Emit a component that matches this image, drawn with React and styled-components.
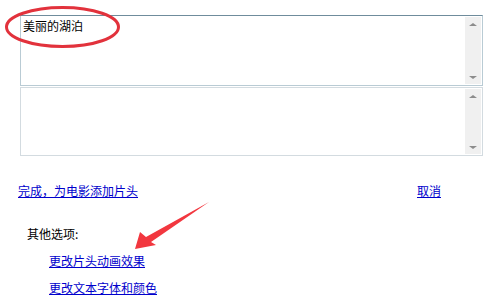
import styled, { createGlobalStyle } from "styled-components"

const GlobalStyle = createGlobalStyle`
    html, body {
        margin: 0;
        padding: 0;
        background: #fff;
    }
    body {
        font-family: "Noto Sans CJK SC", "Liberation Sans", sans-serif;
        font-size: 12px;
        color: #000;
    }
`;

const Page = styled.div`
    position: relative;
    width: 499px;
    height: 296px;
    overflow: hidden;
`;

const Boxes = styled.div`
    display: flex;
    flex-direction: column;
    gap: 1px;
    margin-left: 20px;
    padding-top: 15px;
    width: 463px;
`;

const TextBox = styled.div`
    display: flex;
    height: ${(p) => p.h}px;
    box-sizing: border-box;
    border: 1px solid ${(p) => (p.active ? "#b9cbd4" : "#d3dbe0")};
    border-top-color: ${(p) => (p.active ? "#6f8c9c" : "#d3dbe0")};
`;

const TextArea = styled.div`
    flex: 1;
    padding: 3px 2px;
    line-height: 14px;
`;

const ScrollBar = styled.div`
    width: 16px;
    margin: 1px 1px 1px 0;
    background: #f0f0f0;
    display: flex;
    flex-direction: column;
    justify-content: space-between;
    align-items: center;
    padding: 6px 0 5px;
    box-sizing: border-box;
`;

const Arrow = styled.div`
    width: 0;
    height: 0;
    border-left: 4px solid transparent;
    border-right: 4px solid transparent;
    ${(p) =>
        p.down
            ? "border-top: 3px solid #8c8c8c;"
            : "border-bottom: 3px solid #8c8c8c;"}
`;

const ActionRow = styled.div`
    display: flex;
    justify-content: space-between;
    padding: 0 58px 0 18px;
    margin-top: 28px;
    line-height: 14px;
`;

const Link = styled.a`
    color: #0000cc;
    text-decoration: underline;
    cursor: pointer;
`;

const Options = styled.div`
    display: flex;
    flex-direction: column;
    margin-top: 29px;
    line-height: 14px;
`;

const OptionsTitle = styled.div`
    margin-left: 27px;
    margin-bottom: 13px;
`;

const OptionLink = styled(Link)`
    margin-left: 49px;
    margin-bottom: 13px;
    align-self: flex-start;
`;

const Markup = styled.svg`
    position: absolute;
    left: 0;
    top: 0;
    pointer-events: none;
`;

const App = () => {
    return (
        <Page>
            <GlobalStyle />
            <Boxes>
                <TextBox h={71} active>
                    <TextArea>美丽的湖泊</TextArea>
                    <ScrollBar>
                        <Arrow />
                        <Arrow down />
                    </ScrollBar>
                </TextBox>
                <TextBox h={69}>
                    <TextArea />
                    <ScrollBar>
                        <Arrow />
                        <Arrow down />
                    </ScrollBar>
                </TextBox>
            </Boxes>
            <ActionRow>
                <Link>完成，为电影添加片头</Link>
                <Link>取消</Link>
            </ActionRow>
            <Options>
                <OptionsTitle>其他选项:</OptionsTitle>
                <OptionLink>更改片头动画效果</OptionLink>
                <OptionLink>更改文本字体和颜色</OptionLink>
            </Options>
            <Markup width="499" height="296" viewBox="0 0 499 296">
                <ellipse cx="62.5" cy="27" rx="56" ry="19.5" fill="none" stroke="#e2323c" strokeWidth="3" />
                <polygon
                    points="209,202 151,242 156,245 135,249 140,232 146,237"
                    fill="#f2373f"
                />
            </Markup>
        </Page>
    )
}

export default App;
